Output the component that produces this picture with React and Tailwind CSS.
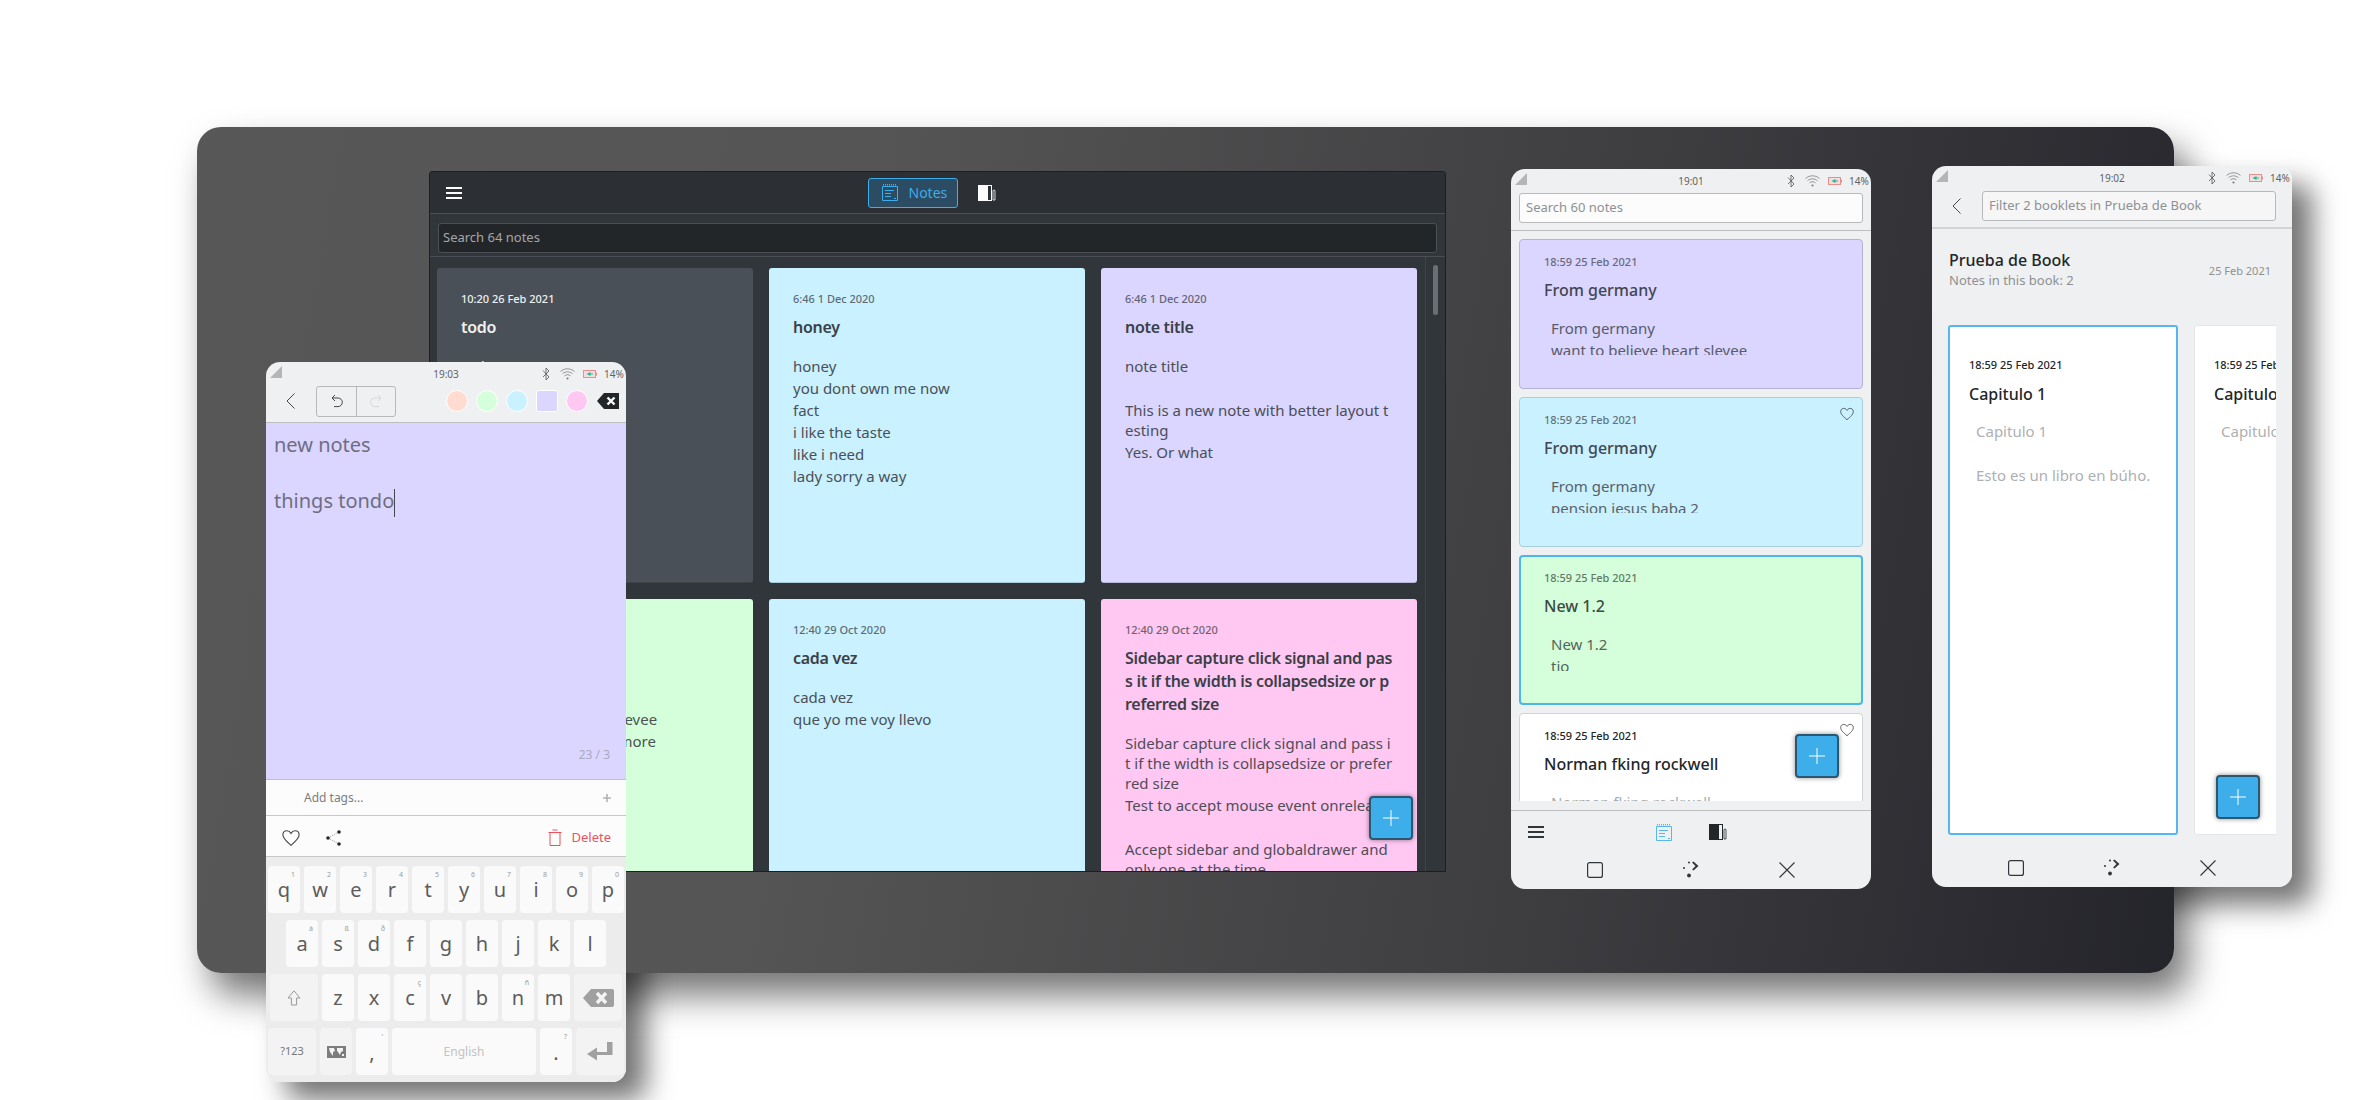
import React from 'react'

const Hamburger = ({ className }) => (
	<svg className={className} width="16" height="12" viewBox="0 0 16 12" fill="none" stroke="currentColor" strokeWidth="2">
		<path d="M0 1h16M0 6h16M0 11h16" />
	</svg>
)

const NotesIcon = ({ className }) => (
	<svg className={className} width="16" height="17" viewBox="0 0 16 17" fill="none" stroke="currentColor">
		<path d="M.5 2.5h15v14H.5z" />
		<path d="M1 .8h14" strokeDasharray="1 1" strokeWidth="1.5" />
		<path d="M3 6.5h9M3 9.5h6M3 12.5h6M12 14.5h2" />
	</svg>
)

const BookIcon = ({ className, panel }) => (
	<svg className={className} width="18" height="16" viewBox="0 0 18 16" fill="none">
		<rect x="0" y="0" width="14" height="16" fill="currentColor" />
		<rect x="10" y="1" width="3" height="14" fill={panel} />
		<path d="M15.5 5l1 0 .5 1v9h-2V6z" stroke="currentColor" strokeWidth=".8" />
	</svg>
)

const Heart = ({ className, size = 14 }) => (
	<svg className={className} width={size} height={size} viewBox="0 0 16 16" fill="none" stroke="currentColor" strokeWidth="1">
		<path d="M8 14.5C4 11 .8 8.6.8 5.2.8 3 2.4 1.6 4.3 1.6c1.6 0 2.9.9 3.7 2.3.8-1.4 2.1-2.3 3.7-2.3 1.9 0 3.5 1.4 3.5 3.6 0 3.4-3.2 5.8-7.2 9.3z" />
	</svg>
)

const Chevron = ({ className }) => (
	<svg className={className} width="9" height="16" viewBox="0 0 9 16" fill="none" stroke="currentColor" strokeWidth="1">
		<path d="M8.5.5 1 8l7.5 7.5" />
	</svg>
)

const Plus = () => (
	<svg width="16" height="16" viewBox="0 0 16 16" stroke="white" strokeWidth="1">
		<path d="M8 0v16M0 8h16" />
	</svg>
)

function Fab({ className }) {
	return (
		<div className={`absolute w-11 h-11 flex items-center justify-center rounded-[4px] bg-[#3daee9] border-2 border-[#2c5770] shadow-[0_0_5px_rgba(0,0,0,0.45)] ${className}`}>
			<Plus />
		</div>
	)
}

function WindowControls({ className }) {
	return (
		<div className={`flex items-center text-[#31363b] ${className}`}>
			<svg width="16" height="16" viewBox="0 0 16 16" fill="none" stroke="currentColor" strokeWidth="1.2">
				<rect x=".6" y=".6" width="14.8" height="14.8" rx="2" />
			</svg>
			<svg width="18" height="18" viewBox="0 0 18 18" fill="currentColor">
				<path d="M10 1.5l1.5-1 5 4.5-5 4.5-1.4-1L13.5 5z" />
				<circle cx="7" cy="1.5" r="1" />
				<circle cx="2" cy="7" r="1" />
				<circle cx="7" cy="14.5" r="1.9" />
			</svg>
			<svg width="16" height="16" viewBox="0 0 16 16" fill="none" stroke="currentColor" strokeWidth="1.1">
				<path d="M.5.5l15 15M15.5.5l-15 15" />
			</svg>
		</div>
	)
}

function StatusBar({ time }) {
	return (
		<div className="relative h-6 shrink-0 flex items-center justify-center text-[10px] text-[#5f6265]">
			<svg className="absolute left-[4px] top-[4px]" width="12" height="12" viewBox="0 0 12 12">
				<path d="M0 12L12 0v12z" fill="#b4b5b7" />
			</svg>
			<span>{time}</span>
			<div className="absolute right-[5px] top-0 h-6 flex items-center">
				<svg width="8" height="14" viewBox="0 0 8 14" fill="none" stroke="#50535a" strokeWidth=".8">
					<path d="M1 3.5l6 6.5L4 13V1l3 3-6 6" />
				</svg>
				<svg className="ml-[10px]" width="15" height="12" viewBox="0 0 15 12" fill="none" stroke="#7c7e83" strokeWidth=".8">
					<path d="M.5 3.5c4-3.6 10-3.6 14 0M2.5 5.7c3-2.5 7-2.5 10 0M4.5 7.8c2-1.5 4-1.5 6 0" />
					<circle cx="7.5" cy="10.5" r="1.1" fill="#7c7e83" stroke="none" />
				</svg>
				<svg className="ml-[8px]" width="14" height="8" viewBox="0 0 14 8">
					<rect x=".5" y=".5" width="12" height="7" fill="#f7dcdc" stroke="#e58f8f" />
					<rect x="13" y="2.5" width="1" height="3" fill="#e58f8f" />
					<path d="M3.5 4L7.5 2v1.5H10v1H7.5V6z" fill="#1abc9c" />
				</svg>
				<span className="ml-[7px] w-[17px]">14%</span>
			</div>
		</div>
	)
}

// line breaks are the ones in the app: it wraps anywhere, mid word
const desktopNotes = [
	{ date: '10:20 26 Feb 2021', title: 'todo', body: ['todo'], dark: true },
	{ date: '6:46 1 Dec 2020', title: 'honey', body: ['honey', 'you dont own me now', 'fact', 'i like the taste', 'like i need', 'lady sorry a way'], bg: 'bg-[#c9f1ff]' },
	{ date: '6:46 1 Dec 2020', title: 'note title', body: ['note title', '', 'This is a new note with better layout t\nesting', 'Yes. Or what'], bg: 'bg-[#dad6ff]' },
	{ date: '18:59 25 Feb 2021', title: 'From germany', body: ['From germany', 'want to believe heart slevee', 'ones heart and a little more'], bg: 'bg-[#d4ffda]' },
	{ date: '12:40 29 Oct 2020', title: 'cada vez', body: ['cada vez', 'que yo me voy llevo'], bg: 'bg-[#c9f1ff]' },
	{
		date: '12:40 29 Oct 2020',
		title: 'Sidebar capture click signal and pas\ns it if the width is collapsedsize or p\nreferred size',
		body: ['Sidebar capture click signal and pass i\nt if the width is collapsedsize or prefer\nred size', 'Test to accept mouse event onrelease', '', 'Accept sidebar and globaldrawer and\nonly one at the time'],
		bg: 'bg-[#ffc8f3]',
	},
]

function DesktopCard({ note }) {
	const dark = note.dark
	return (
		<div className={`h-[315px] rounded-[3px] pl-6 pt-[23px] overflow-hidden border-b border-black/15 ${dark ? 'bg-[#4a5058] text-[#eff0f1]' : `${note.bg} text-[#3c3f46]`}`}>
			<p className={`text-[11px] leading-4 font-medium ${dark ? '' : 'opacity-75'}`}>{note.date}</p>
			<h3 className="mt-[9px] text-[16px] leading-[23px] font-semibold tracking-[-0.3px] whitespace-pre-line">{note.title}</h3>
			<div className={`mt-[17px] text-[15px] ${dark ? '' : 'opacity-90'}`}>
				{note.body.map((line, i) => (
					<p key={i} className="leading-5 mb-0.5 min-h-5 whitespace-pre-line">{line}</p>
				))}
			</div>
		</div>
	)
}

function DesktopWindow() {
	return (
		<div className="absolute left-[429px] top-[171px] w-[1017px] h-[701px] bg-[#31363b] border border-[#1c1f22] rounded-t-[3px] overflow-hidden flex flex-col">
			<div className="relative h-[42px] shrink-0 bg-[#2c2f34] border-b border-[#4c5056] flex items-center justify-center">
				<Hamburger className="absolute left-4 top-[15px] text-[#fcfcfc]" />
				<div className="ml-[-12px] w-[90px] h-[30px] rounded-[3px] border border-[#3daee9] bg-[#2b4c62] flex items-center pl-[13px] gap-[11px] text-[#3daee9] text-[14px]">
					<NotesIcon />
					<span>Notes</span>
				</div>
				<BookIcon className="ml-5 text-[#fcfcfc]" panel="#2c2f34" />
			</div>
			<div className="h-[43px] shrink-0 px-2 pt-[5px] flex items-center border-b border-[#4c5056]">
				<div className="w-full h-[30px] rounded-[3px] bg-[#232629] border border-[#4c5056] pl-[4px] flex items-center text-[13px] text-[#a3a7ab]">
					Search 64 notes
				</div>
			</div>
			<div className="relative flex-1 overflow-hidden pl-[7px] pt-[11px]">
				<div className="grid grid-cols-[repeat(3,316px)] gap-x-4 gap-y-4">
					{desktopNotes.map(n => <DesktopCard key={n.title + n.date} note={n} />)}
				</div>
				<div className="absolute right-0 top-0 bottom-0 w-5 border-l border-[#3e4349]">
					<div className="ml-[7px] mt-[8px] w-[5px] h-[50px] rounded-full bg-[#6a6f75]" />
				</div>
				<Fab className="left-[939px] top-[539px]" />
			</div>
		</div>
	)
}

function NotesPhone() {
	const cards = [
		{ body: ['From germany', 'want to believe heart slevee'], title: 'From germany', cls: 'pl-6 pt-[14px] bg-[#dad6ff] border border-[#b4b2d6] text-[#44454f]' },
		{ body: ['From germany', 'pension jesus baba 2'], title: 'From germany', fav: true, cls: 'pl-6 pt-[14px] bg-[#c9f1ff] border border-[#a8cfdd] text-[#44484f]' },
		{ body: ['New 1.2', 'tio'], title: 'New 1.2', cls: 'pl-[23px] pt-[13px] bg-[#d4ffda] border-2 border-[#4db5ee] text-[#3f4a42]' },
	]
	return (
		<div className="absolute left-[1511px] top-[169px] w-[360px] h-[720px] rounded-[14px] bg-[#eff0f1] overflow-hidden flex flex-col">
			<StatusBar time="19:01" />
			<div className="h-[38px] shrink-0 px-2 border-b border-[#bcbec0]">
				<div className="h-[30px] rounded-[3px] bg-[#fcfcfc] border border-[#b6b8ba] pl-[6px] flex items-center text-[13px] text-[#8d9194]">
					Search 60 notes
				</div>
			</div>
			<div className="relative h-[570px] shrink-0 overflow-hidden px-2 pt-2 flex flex-col gap-2">
				{cards.map((c, i) => (
					<div key={i} className={`relative h-[150px] shrink-0 rounded-[4px] ${c.cls}`}>
						{c.fav && <Heart className="absolute right-[8px] top-[9px]" />}
						<p className="text-[11px] leading-4 font-medium opacity-75">18:59 25 Feb 2021</p>
						<h3 className="mt-[8px] text-[16px] leading-[24px] font-medium">{c.title}</h3>
						<div className="mt-[15px] ml-[7px] h-[38px] overflow-hidden text-[15px] leading-[22px] opacity-85">
							{c.body.map(l => <p key={l}>{l}</p>)}
						</div>
					</div>
				))}
				<div className="relative h-[150px] shrink-0 rounded-[4px] bg-white border border-[#d2d3d5] pl-6 pt-[14px] text-[#232629]">
					<Heart className="absolute right-[8px] top-[9px] text-[#44474b]" />
					<p className="text-[11px] leading-4 font-medium">18:59 25 Feb 2021</p>
					<h3 className="mt-[8px] text-[16px] leading-[24px] font-medium">Norman fking rockwell</h3>
					<p className="mt-[15px] ml-[7px] text-[15px] leading-[22px] text-[#a9abad]">Norman fking rockwell</p>
				</div>
				<Fab className="left-[284px] top-[503px]" />
			</div>
			<div className="relative mt-[9px] h-[41px] shrink-0 border-t border-[#bcbec0]">
				<Hamburger className="absolute left-[17px] top-[15px] text-[#31363b]" />
				<NotesIcon className="absolute left-[145px] top-[13px] text-[#56b7ef]" />
				<BookIcon className="absolute left-[198px] top-[13px] text-[#232629]" panel="#eff0f1" />
			</div>
			<WindowControls className="h-[38px] pl-[76px] gap-[79px]" />
		</div>
	)
}

function BookCard({ selected, children }) {
	return (
		<div className={`shrink-0 w-[230px] h-[510px] rounded-[3px] bg-white ${selected ? 'pl-[19px] pt-[30px] border-2 border-[#56b7ef]' : 'pl-[19px] pt-[31px] border border-[#e4e5e6]'}`}>
			<p className="text-[11px] leading-4 font-medium text-[#232629]">18:59 25 Feb 2021</p>
			<h3 className="mt-[9px] text-[16px] leading-6 font-medium text-[#232629]">Capitulo 1</h3>
			<div className="mt-[14px] ml-[7px] text-[15px] leading-[22px] text-[#aeb0b2] whitespace-nowrap">
				<p>Capitulo 1</p>
				{children}
			</div>
		</div>
	)
}

function BookPhone() {
	return (
		<div className="absolute left-[1932px] top-[166px] w-[360px] h-[721px] rounded-[14px] bg-[#eff0f1] overflow-hidden flex flex-col">
			<StatusBar time="19:02" />
			<div className="h-[39px] shrink-0 pl-[20px] pr-4 pt-px flex items-start gap-[21px] border-b-2 border-[#d3d4d6]">
				<Chevron className="mt-[7px] text-[#44474b] w-[9px]" />
				<div className="flex-1 h-[30px] rounded-[3px] bg-[#f6f6f7] border border-[#b6b8ba] pl-[6px] flex items-center text-[13px] text-[#8d9194]">
					Filter 2 booklets in Prueba de Book
				</div>
			</div>
			<div className="flex justify-between pl-[17px] pr-[21px] pt-[21px] h-[96px] shrink-0">
				<div>
					<h2 className="text-[16px] leading-5 font-medium text-[#232629]">Prueba de Book</h2>
					<p className="text-[13px] leading-5 text-[#8d9194]">Notes in this book: 2</p>
				</div>
				<span className="text-[11px] leading-4 mt-[13px] text-[#8d9194]">25 Feb 2021</span>
			</div>
			<div className="relative ml-4 mr-4 h-[510px] shrink-0 flex gap-4 overflow-hidden">
				<BookCard selected>
					<p>&nbsp;</p>
					<p>Esto es un libro en búho.</p>
				</BookCard>
				<BookCard />
				<Fab className="left-[268px] top-[450px]" />
			</div>
			<WindowControls className="h-[52px] pt-[14px] pl-[76px] gap-[79px]" />
		</div>
	)
}

function Key({ w = 'w-8', hint, soft, children, className = 'text-[20px] text-[#5c5c5c]' }) {
	return (
		<div className={`relative h-[47px] shrink-0 rounded-[4px] flex items-center justify-center ${w} ${soft ? 'bg-[#f3f3f3]' : 'bg-[#fafafa]'} ${className}`}>
			{children}
			{hint && <span className="absolute right-[5px] top-[3px] text-[7px] leading-[12px] text-[#9a9a9a]">{hint}</span>}
		</div>
	)
}

function Keyboard() {
	const row1 = 'qwertyuiop'.split('')
	const row2 = [['a', 'à'], ['s', 'ß'], ['d', 'ð'], ['f'], ['g'], ['h'], ['j'], ['k'], ['l']]
	const row3 = [['z'], ['x'], ['c', 'ç'], ['v'], ['b'], ['n', 'ñ'], ['m']]
	return (
		<div className="h-[225px] bg-[#ececec] pt-[9px] flex flex-col gap-[7px]">
			<div className="flex gap-1 pl-[2px]">
				{row1.map((k, i) => <Key key={k} hint={String((i + 1) % 10)}>{k}</Key>)}
			</div>
			<div className="flex gap-1 pl-5">
				{row2.map(([k, h]) => <Key key={k} hint={h}>{k}</Key>)}
			</div>
			<div className="flex gap-1 pl-1">
				<Key w="w-12" soft>
					<svg width="14" height="16" viewBox="0 0 14 16" fill="none" stroke="#9a9a9a">
						<path d="M7 .8L13 8H9.6v7H4.4V8H1z" />
					</svg>
				</Key>
				{row3.map(([k, h]) => <Key key={k} hint={h}>{k}</Key>)}
				<Key w="w-12" soft>
					<svg width="31" height="18" viewBox="0 0 31 18">
						<path d="M8 0h21a2 2 0 0 1 2 2v14a2 2 0 0 1-2 2H8L0 9z" fill="#a0a0a0" />
						<path d="M14 4l9 10M23 4l-9 10" stroke="#f3f3f3" strokeWidth="3.4" />
					</svg>
				</Key>
			</div>
			<div className="flex gap-1 pl-[2px]">
				<Key w="w-12" soft className="text-[11px] text-[#777]">?123</Key>
				<Key soft>
					<svg width="19" height="12" viewBox="0 0 19 12">
						<rect width="19" height="12" fill="#7d7d7d" />
						<path d="M2 2h5l1 3-2 1v4L3 6zM10 2h6v3l-2 1-1 3-2-3-1-1zM15 8h2v2h-2z" fill="#f3f3f3" />
					</svg>
				</Key>
				<Key hint="'" className="text-[20px] text-[#5c5c5c]"><span className="mt-[2px]">,</span></Key>
				<Key w="w-36" className="text-[12px] text-[#c3c3c3]">English</Key>
				<Key hint="?" className="text-[20px] text-[#5c5c5c]"><span className="mt-[2px]">.</span></Key>
				<Key w="w-12" soft>
					<svg width="26" height="19" viewBox="0 0 26 19" fill="#a0a0a0">
						<path d="M20 0h5.5v13H10v5.5L0 12l10-6.5V10h10z" />
					</svg>
				</Key>
			</div>
		</div>
	)
}

function EditorPhone() {
	const swatches = [
		['bg-[#ffdbd0]', 'rounded-full'],
		['bg-[#d4ffda]', 'rounded-full'],
		['bg-[#c9f1ff]', 'rounded-full'],
		['bg-[#dad6ff]', 'rounded-[3px]'],
		['bg-[#ffc8f3]', 'rounded-full'],
	]
	return (
		<div className="absolute left-[266px] top-[362px] w-[360px] h-[720px] rounded-[14px] bg-[#eff0f1] overflow-hidden flex flex-col">
			<StatusBar time="19:03" />
			<div className="h-[37px] shrink-0 flex items-center pl-5 pb-[6px] border-b border-[#bcbec0]">
				<Chevron className="text-[#44474b]" />
				<div className="ml-[21px] w-20 h-[31px] rounded-[3px] border border-[#b6b8ba] flex">
					<div className="w-10 flex items-center justify-center border-r border-[#b6b8ba]">
						<svg width="12" height="14" viewBox="0 0 12 14" fill="none" stroke="#44474b">
							<path d="M4 1L1 4l3 3M1 4h6a4 4 0 0 1 0 8.6H3" />
						</svg>
					</div>
					<div className="flex-1 flex items-center justify-center">
						<svg width="12" height="14" viewBox="0 0 12 14" fill="none" stroke="#d5d6d8">
							<path d="M8 1l3 3-3 3M11 4H5a4 4 0 0 0 0 8.6h4" />
						</svg>
					</div>
				</div>
				<div className="ml-[50px] flex gap-2">
					{swatches.map(([bg, shape]) => (
						<div key={bg} className={`w-[22px] h-[22px] border border-white ${bg} ${shape}`} />
					))}
				</div>
				<svg className="ml-[9px]" width="22" height="16" viewBox="0 0 22 16">
					<path d="M7 0h15v16H7L0 8z" fill="#232629" />
					<path d="M10.5 4.5l7 7M17.5 4.5l-7 7" stroke="#fcfcfc" strokeWidth="2.4" />
				</svg>
			</div>
			<div className="relative h-[356px] shrink-0 bg-[#dad6ff] pl-2 pt-2 text-[20px] leading-[28px] text-[#6f6d82]">
				<p>new notes</p>
				<p>&nbsp;</p>
				<p>things tondo<span className="inline-block w-px h-7 bg-[#44474b] align-middle" /></p>
				<span className="absolute right-[16px] bottom-[16px] text-[12px] leading-4 text-[#aaa8c2]">23 / 3</span>
			</div>
			<div className="h-[36px] shrink-0 bg-[#fcfcfc] border-t border-[#bcbec0] flex items-center pl-[38px] pr-[14px] justify-between text-[12px] text-[#7b7d80]">
				<span>Add tags...</span>
				<svg width="10" height="10" viewBox="0 0 10 10" stroke="#b0b2b4" strokeWidth="1.6">
					<path d="M5 1v8M1 5h8" />
				</svg>
			</div>
			<div className="h-[42px] shrink-0 bg-[#fcfcfc] border-t border-b border-[#c6c8ca] pt-[3px] flex items-center pl-[16px] pr-[15px]">
				<Heart size={18} className="text-[#44474b]" />
				<svg className="ml-[26px]" width="15" height="16" viewBox="0 0 15 16" fill="#232629">
					<circle cx="2" cy="8" r="1.8" />
					<circle cx="13" cy="2" r="1.8" />
					<circle cx="13" cy="14" r="1.8" />
					<path d="M4 7l7-4M4 9l7 4" stroke="#232629" strokeWidth=".5" strokeDasharray="1 1.2" fill="none" />
				</svg>
				<svg className="ml-auto" width="14" height="17" viewBox="0 0 14 17" fill="none" stroke="#e8535f" strokeWidth="1">
					<path d="M.5 3.5h13M4.5 1h5M2 3.5v13h10v-13" />
				</svg>
				<span className="ml-[9px] text-[13px] text-[#e8535f]">Delete</span>
			</div>
			<Keyboard />
		</div>
	)
}

export default function App() {
	return (
		<div className="relative w-[2372px] h-[1100px] overflow-hidden bg-white font-['Noto_Sans','Open_Sans',sans-serif]">
			{/* shadows sit under the desktop, they never fall on it */}
			<div className="absolute left-[266px] top-[362px] w-[360px] h-[720px] rounded-[14px] shadow-[20px_18px_28px_rgba(0,0,0,0.55)]" />
			<div className="absolute left-[1932px] top-[166px] w-[360px] h-[721px] rounded-[14px] shadow-[20px_18px_28px_rgba(0,0,0,0.55)]" />
			<div className="absolute left-[197px] top-[127px] w-[1977px] h-[846px] rounded-[24px] shadow-[14px_22px_36px_rgba(0,0,0,0.55)] bg-[linear-gradient(100deg,#575757_0%,#555555_32%,#3d3d40_70%,#24242b_100%)]" />
			<DesktopWindow />
			<NotesPhone />
			<BookPhone />
			<EditorPhone />
		</div>
	)
}
